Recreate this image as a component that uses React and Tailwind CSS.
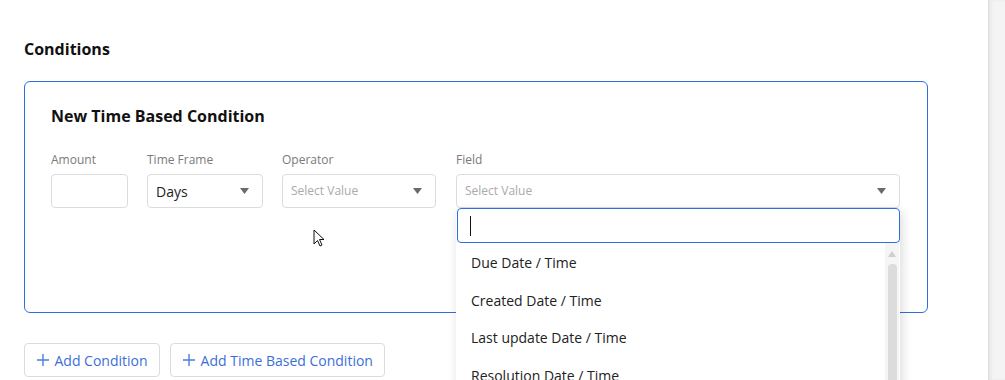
import React from 'react'

// Small dark caret used in the select boxes
const Caret = () => (
  <svg width="9" height="6" viewBox="0 0 9 6" className="shrink-0">
    <path d="M0 0 L9 0 L4.5 6 Z" fill="#6a6a6a" />
  </svg>
)

const PlusIcon = () => (
  <svg width="12" height="12" viewBox="0 0 12 12" className="shrink-0">
    <path d="M6 0 V12 M0 6 H12" stroke="#4a7ee0" strokeWidth="1.4" />
  </svg>
)

const Field = ({ label, width, children }) => (
  <div className="flex flex-col" style={{ width }}>
    <span className="text-[12px] leading-4 text-[#7a7a7a] mb-[6px]">{label}</span>
    {children}
  </div>
)

const SelectBox = ({ value, placeholder }) => (
  <div className="h-[34px] border border-[#dcdcdc] rounded-[4px] flex items-center justify-between pl-[8px] pr-[13px]">
    {value ? (
      <span className="text-[14px] text-[#222]">{value}</span>
    ) : (
      <span className="text-[12px] text-[#aaa]">{placeholder}</span>
    )}
    <Caret />
  </div>
)

const fieldOptions = [
  'Due Date / Time',
  'Created Date / Time',
  'Last update Date / Time',
  'Resolution Date / Time',
]

export default function App() {
  return (
    <div className="flex w-[1005px] h-[380px] overflow-hidden bg-white" style={{ fontFamily: '"Open Sans", "Noto Sans", sans-serif' }}>
      {/* Main content */}
      <div className="relative w-[988px] shrink-0 pl-6 pt-[39px]">
        <h2 className="text-[16px] leading-5 font-bold text-[#111]">Conditions</h2>

        {/* Condition card */}
        <div className="mt-[22px] w-[904px] h-[232px] border border-[#2f6fdd] rounded-[6px] pl-[26px] pt-[23px]">
          <h3 className="text-[16px] leading-[22px] font-bold text-[#111]">New Time Based Condition</h3>
          <div className="flex mt-[25px]">
            <Field label="Amount" width={77}>
              <div className="h-[34px] border border-[#dcdcdc] rounded-[4px]" />
            </Field>
            <div className="w-[19px]" />
            <Field label="Time Frame" width={116}>
              <SelectBox value="Days" />
            </Field>
            <div className="w-[19px]" />
            <Field label="Operator" width={154}>
              <SelectBox placeholder="Select Value" />
            </Field>
            <div className="w-[20px]" />
            <Field label="Field" width={444}>
              <SelectBox placeholder="Select Value" />
            </Field>
          </div>
        </div>

        {/* Buttons */}
        <div className="flex gap-[10px] mt-[30px]">
          <button className="h-[34px] px-[11.5px] flex items-center gap-[6px] border border-[#dcdcdc] rounded-[4px] text-[14px] text-[#3b6fd8]">
            <PlusIcon />
            Add Condition
          </button>
          <button className="h-[34px] px-[11.5px] flex items-center gap-[6px] border border-[#dcdcdc] rounded-[4px] text-[14px] text-[#3b6fd8]">
            <PlusIcon />
            Add Time Based Condition
          </button>
        </div>

        {/* Open dropdown for Field */}
        <div className="absolute left-[456px] top-[208px] w-[444px] h-[200px] bg-white shadow-[2px_4px_10px_rgba(0,0,0,0.15)]">
          <div className="h-[35px] ml-px border border-[#2f6fdd] rounded-[4px] flex items-center pl-[12px]">
            <div className="w-px h-[20px] bg-[#111]" />
          </div>
          <div className="flex">
            <div className="flex-1 flex flex-col pt-px">
              {fieldOptions.map((opt) => (
                <div key={opt} className="h-[37.5px] flex items-center pl-[15px] text-[14px] text-[#222]">
                  {opt}
                </div>
              ))}
            </div>
            <div className="w-[14px] mr-[1px] bg-[#f5f5f5] flex flex-col items-center pt-[8px]">
              <svg width="8" height="6" viewBox="0 0 8 6">
                <path d="M0 6 L4 0 L8 6 Z" fill="#cfcfcf" />
              </svg>
              <div className="mt-[7px] w-[9px] flex-1 bg-[#dcdcdc] rounded-t-[4px]" />
            </div>
          </div>
        </div>

        {/* Mouse pointer */}
        <svg className="absolute left-[313px] top-[229px]" width="14" height="20" viewBox="0 0 14 20">
          <path d="M1 1 L1 15 L4.5 11.5 L7 17 L9 16 L6.5 10.5 L11 10.5 Z" fill="white" stroke="#111" strokeWidth="1" />
        </svg>
      </div>

      {/* Right gutter */}
      <div className="flex-1 bg-[#f4f4f4] border-l border-[#dedede] shadow-[inset_2px_0_3px_rgba(0,0,0,0.06)]" />
    </div>
  )
}
